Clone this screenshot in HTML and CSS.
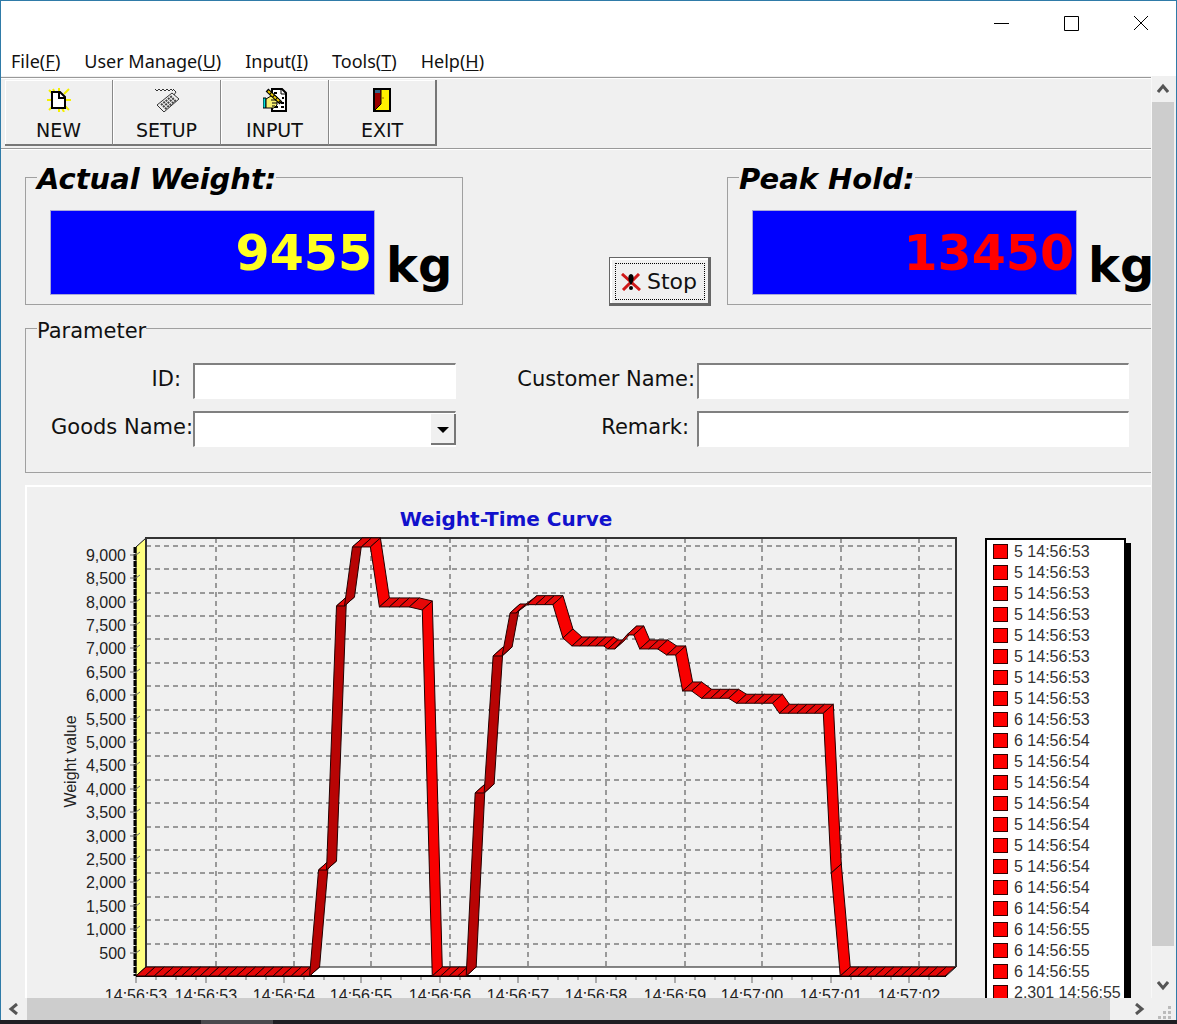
FILE: index.html
```html
<!DOCTYPE html>
<html lang="en">

<head>
    <meta charset="utf-8">
    <meta name="viewport" content="width=device-width">
    <link rel="stylesheet" href="styles.css">
    <title>Weight monitor</title>
</head>

<body>
    <div class="window">
        <header class="titlebar">
            <button class="caption" aria-label="Minimize">
                <svg width="16" height="16" viewBox="0 0 16 16"><path d="M1 8.5h15" /></svg>
            </button>
            <button class="caption" aria-label="Maximize">
                <svg width="16" height="16" viewBox="0 0 16 16"><path d="M1.5 1.5h14v14h-14z" /></svg>
            </button>
            <button class="caption" aria-label="Close">
                <svg width="16" height="16" viewBox="0 0 16 16"><path d="M1 1l14 14M15 1L1 15" /></svg>
            </button>
        </header>

        <nav class="menu">
            <button>File(<u>F</u>)</button>
            <button>User Manage(<u>U</u>)</button>
            <button>Input(<u>I</u>)</button>
            <button>Tools(<u>T</u>)</button>
            <button>Help(<u>H</u>)</button>
        </nav>

        <div class="scroller">
            <main class="viewport">
                <div class="toolbar">
                    <button class="tool">
                        <svg width="24" height="24" viewBox="0 0 24 24">
                            <path d="M2 2l4 4M12 0v4M22 1l-5 5M0 12h4M24 12h-5M2 22l4-4M22 22l-4-4M12 24v-4M6 1l2 4M17 24l-2-4" stroke="#f4f000" stroke-width="2" />
                            <path d="M5 4h8l5 5v11H5z" fill="#fff" stroke="#000" stroke-width="2" />
                            <path d="M12 4v6h6" fill="none" stroke="#000" stroke-width="2" />
                        </svg>
                        NEW
                    </button>
                    <button class="tool">
                        <svg width="24" height="24" viewBox="0 0 24 24" fill="none" stroke="#333">
                            <path d="M0 1l2 2 2-2 2 2 2-2 2 2 2-2 2 2 2-2 2 2" />
                            <path d="M18 1l3 3-2 3" />
                            <path d="M2 17L17 5l7 6L9 24z" fill="#eee" />
                            <path d="M6 17l11-9M8 19l11-9M10 21l11-9" stroke="#444" stroke-width="2" stroke-dasharray="2 1" />
                        </svg>
                        SETUP
                    </button>
                    <button class="tool">
                        <svg width="24" height="24" viewBox="0 0 24 24">
                            <path d="M9 1h10l4 4v18H9z" fill="#fff" stroke="#000" stroke-width="2" />
                            <path d="M18 1v5h5" fill="none" stroke="#000" />
                            <path d="M12 19h3M18 19h3M19 10h2M18 15h3M11 5h3" stroke="#000" stroke-width="2" />
                            <path d="M0 10h3v10H0z" fill="#00e0e0" stroke="#000" />
                            <path d="M3 11l5-3h5l4 4-3 2v3l-3 3H3z" fill="#f7f070" stroke="#000" />
                            <path d="M8 12h6M9 15h5M9 18h3" stroke="#000" />
                            <path d="M4 2l14 13" stroke="#000" stroke-width="4" />
                            <path d="M5 3l12 11" stroke="#e8c800" stroke-width="2" stroke-dasharray="3 1" />
                        </svg>
                        INPUT
                    </button>
                    <button class="tool">
                        <svg width="24" height="24" viewBox="0 0 24 24">
                            <path d="M4 1h16v22H4z" fill="#ffef00" stroke="#000" stroke-width="2" />
                            <path d="M5 2h6v14l-6 6z" fill="#900" />
                            <path d="M5 2h5v3H5z" fill="#368" />
                            <path d="M11 2v14l-6 6" fill="none" stroke="#000" />
                            <path d="M13 9v2" stroke="#a60" />
                        </svg>
                        EXIT
                    </button>
                </div>

                <form class="form">
                    <div class="readings">
                        <fieldset class="group reading">
                            <legend>Actual Weight:</legend>
                            <output class="display actual">9455</output>
                            <span class="unit">kg</span>
                        </fieldset>

                        <button type="button" class="stop">
                            <svg width="20" height="18" viewBox="0 0 20 18">
                                <path d="M1 1l18 16M18 1L2 17" stroke="#d01818" stroke-width="3" />
                                <path d="M10 1c4 1 3 7 0 11c-3-4-4-10 0-11z" />
                                <circle cx="10" cy="15" r="2" />
                            </svg>
                            Stop
                        </button>

                        <fieldset class="group reading">
                            <legend>Peak Hold:</legend>
                            <output class="display peak">13450</output>
                            <span class="unit">kg</span>
                        </fieldset>
                    </div>

                    <fieldset class="group parameter">
                        <legend>Parameter</legend>
                        <label for="id">ID:</label>
                        <input id="id" type="text">
                        <label for="customer">Customer Name:</label>
                        <input id="customer" type="text">
                        <label for="goods">Goods Name:</label>
                        <div class="combo">
                            <select id="goods">
                                <option></option>
                            </select>
                            <span class="arrow"></span>
                        </div>
                        <label for="remark">Remark:</label>
                        <input id="remark" type="text">
                    </fieldset>

                    <section class="chart">
                        <h2>Weight-Time Curve</h2>
                        <div class="chart-body">
                            <svg id="plot" class="plot" role="img" aria-label="Weight-Time Curve"></svg>
                            <ul id="legend" class="legend"></ul>
                        </div>
                    </section>
                </form>
            </main>

            <div class="scrollbar vertical">
                <button aria-label="Scroll up">
                    <svg width="12" height="12" viewBox="0 0 12 12"><path d="M1 9l5-6 5 6" /></svg>
                </button>
                <div class="thumb"></div>
                <button aria-label="Scroll down">
                    <svg width="12" height="12" viewBox="0 0 12 12"><path d="M1 3l5 6 5-6" /></svg>
                </button>
            </div>
            <div class="scrollbar horizontal">
                <button aria-label="Scroll left">
                    <svg width="12" height="12" viewBox="0 0 12 12"><path d="M9 1L3 6l6 5" /></svg>
                </button>
                <div class="thumb"></div>
                <button aria-label="Scroll right">
                    <svg width="12" height="12" viewBox="0 0 12 12"><path d="M3 1l6 5-6 5" /></svg>
                </button>
            </div>
            <svg class="grip" width="24" height="22" viewBox="0 0 24 22">
                <path d="M16 8h3v3h-3zM11 13h3v3h-3zM16 13h3v3h-3zM6 18h3v3H6zM11 18h3v3h-3zM16 18h3v3h-3z" fill="#bbb" />
            </svg>
        </div>
    </div>
    <div class="taskbar"><span></span></div>

    <script src="chart.js"></script>
</body>

</html>
```
FILE: styles.css
```css
* {
    box-sizing: border-box;
}

body {
    margin: 0;
    height: 100vh;
    display: flex;
    flex-direction: column;
    overflow: hidden;
    background-color: #f0f0f0;
    color: #111;
    font-family: "DejaVu Sans", Verdana, sans-serif;
    font-size: 21px;
}

button {
    margin: 0;
    padding: 0;
    border: 0;
    background: none;
    color: inherit;
    font: inherit;
}

.window {
    flex: 1;
    min-height: 0;
    display: flex;
    flex-direction: column;
    border: 1px solid #2f7ba8;
    border-bottom: 0;
}

/* title bar and menu */

.titlebar {
    display: flex;
    justify-content: flex-end;
    height: 45px;
    background-color: #fff;
}

.caption {
    width: 70px;
}

.caption svg {
    fill: none;
    stroke: #000;
}

.menu {
    display: flex;
    gap: 24px;
    height: 30px;
    padding: 0 10px;
    background-color: #fff;
    font-family: "Noto Sans", sans-serif;
    font-size: 18px;
    line-height: 30px;
}

.menu u {
    text-underline-offset: 2px;
}

/* scrolling area */

.scroller {
    flex: 1;
    min-height: 0;
    display: grid;
    grid-template-columns: minmax(0, 1fr) 24px;
    grid-template-rows: minmax(0, 1fr) 22px;
}

.viewport {
    overflow: hidden;
    border-right: 1px solid #f8f8f8;
}

.scrollbar {
    display: flex;
    background-color: #f0f0f0;
}

.scrollbar button {
    flex: none;
    width: 26px;
    display: flex;
    align-items: center;
    justify-content: center;
}

.scrollbar svg {
    fill: none;
    stroke: #555;
    stroke-width: 3;
}

.scrollbar .thumb {
    flex: 1;
    background-color: #cdcdcd;
}

.vertical {
    flex-direction: column;
    padding: 0 2px 0 0;
}

.vertical button {
    width: 22px;
    height: 26px;
}

.vertical .thumb {
    margin-bottom: 26px;
}

.horizontal .thumb {
    margin-right: 16px;
}

.taskbar {
    height: 4px;
    padding-left: 201px;
    background-color: #1f1d22;
}

.taskbar span {
    display: block;
    width: 72px;
    height: 4px;
    background-color: #4b494d;
}

/* toolbar */

.toolbar {
    display: flex;
    height: 72px;
    margin-top: 1px;
    padding: 2px 4px;
    border-top: 1px solid #999;
    border-bottom: 1px solid #999;
    box-shadow: inset 0 1px #fff, 0 1px #fff;
}

.tool {
    display: flex;
    flex-direction: column;
    align-items: center;
    gap: 6px;
    width: 108px;
    padding-top: 8px;
    border: solid #777;
    border-width: 0 2px 2px 0;
    box-shadow: inset 1px 1px #fff;
    font-size: 19px;
    line-height: 24px;
}

.tool:not(:last-child) {
    border-right: 1px solid #888;
}

.tool svg {
    fill: none;
}

/* form */

.form {
    display: flex;
    flex-direction: column;
    margin-right: -14px;
    padding: 9px 0 0 24px;
}

.group {
    margin: 0;
    min-width: 0;
    border: 1px solid #a0a0a0;
}

.group legend {
    margin-left: -13px;
    padding: 0;
}

.readings {
    display: flex;
    align-items: flex-end;
    height: 147px;
}

.reading {
    display: flex;
    align-items: flex-start;
    gap: 11px;
    width: 438px;
    height: 147px;
    padding: 14px 0 0 24px;
}

.reading legend {
    padding-top: 4px;
    font-size: 29px;
    font-weight: bold;
    font-style: italic;
    line-height: 34px;
    color: #000;
}

.display {
    width: 325px;
    height: 85px;
    padding-right: 2px;
    border: 1px solid #a8a8d8;
    background-color: #00f;
    font-size: 49px;
    font-weight: bold;
    line-height: 86px;
    text-align: right;
}

.actual {
    color: #ff2;
}

.peak {
    color: #f00;
}

.unit {
    padding-top: 25px;
    color: #000;
    font-size: 48px;
    font-weight: bold;
    line-height: 60px;
}

.stop {
    display: flex;
    align-items: center;
    justify-content: center;
    gap: 6px;
    width: 102px;
    height: 49px;
    margin: 0 16px -1px auto;
    padding-top: 2px;
    border: 1px solid #666;
    border-right-width: 3px;
    border-bottom-width: 3px;
    outline: 1px dotted #000;
    outline-offset: -7px;
    box-shadow: inset 2px 2px #fff;
    font-size: 22px;
}

.parameter {
    display: grid;
    grid-template-columns: 143px 263px 241px minmax(0, 1fr);
    row-gap: 12px;
    height: 161px;
    margin-top: 7px;
    padding: 19px 35px 0 24px;
    align-content: start;
}

.parameter legend {
    padding-top: 6px;
    line-height: 26px;
}

.parameter label {
    padding-right: 2px;
    line-height: 32px;
    text-align: right;
    white-space: nowrap;
}

.parameter label[for="id"] {
    padding-right: 12px;
}

.parameter label[for="goods"] {
    padding-right: 0;
}

.parameter label[for="remark"] {
    padding-right: 8px;
}

.parameter input,
.parameter select {
    width: 100%;
    height: 36px;
    padding: 0 6px;
    border: solid #808080;
    border-width: 2px 1px 1px 2px;
    border-right-color: #fff;
    border-bottom-color: #fff;
    border-radius: 0;
    background-color: #fff;
    font: inherit;
    appearance: none;
}

.combo {
    position: relative;
}

.combo .arrow {
    position: absolute;
    top: 3px;
    right: 0;
    width: 25px;
    height: 31px;
    border: solid #777;
    border-width: 0 2px 2px 0;
    background-color: #f0f0f0;
    pointer-events: none;
}

.combo .arrow::after {
    content: "";
    display: block;
    margin: 13px 6px;
    border: 6px solid transparent;
    border-top-color: #000;
    border-bottom: 0;
}

/* chart */

.chart {
    margin-top: 12px;
    border: solid #fff;
    border-width: 2px 0 0 2px;
}

.chart h2 {
    margin: 0;
    padding: 18px 180px 0 0;
    color: #11c;
    font-size: 20px;
    line-height: 28px;
    text-align: center;
}

.chart-body {
    display: flex;
    gap: 20px;
    padding-right: 39px;
}

.plot {
    flex: 1;
    min-width: 0;
    height: 480px;
    font-family: "Liberation Sans", Arial, sans-serif;
    font-size: 16px;
}

.plot text {
    fill: #222;
}

.plot .grid {
    stroke: #999;
    stroke-width: 2;
    stroke-dasharray: 5 4;
    shape-rendering: crispEdges;
}

.plot .tick {
    stroke: #666;
}

.plot .frame {
    fill: none;
    stroke: #333;
    stroke-width: 2;
}

.plot .wall {
    fill: #ffff80;
    stroke: #111;
}

.plot .wall-edge {
    stroke: #000;
    stroke-width: 3;
    stroke-dasharray: 6 1;
}

.plot .floor {
    fill: #fff;
    stroke: #111;
}

.plot .axis {
    stroke: #000;
    stroke-width: 2;
}

.plot .ribbon {
    stroke: #200;
    stroke-linejoin: round;
}

.legend {
    flex: none;
    width: 141px;
    margin: 5px 0 0;
    padding: 1px 0 0 6px;
    border: 2px solid #000;
    background-color: #fff;
    box-shadow: 5px 5px #000;
    list-style: none;
    color: #333;
    font-family: "Liberation Sans", Arial, sans-serif;
    font-size: 16px;
    line-height: 21px;
    white-space: nowrap;
}

.legend li {
    display: flex;
    align-items: center;
    gap: 6px;
}

.legend i {
    flex: none;
    width: 15px;
    height: 15px;
    border: 1px solid #300;
    background-color: #f00;
}
```
FILE: chart.js
```js
var plot = document.getElementById('plot');
var legend = document.getElementById('legend');

// [position along the time axis, weight in kg], the axis is 812 units long
var curve = [
    [0, 0], [174, 0], [183, 2265], [191, 2265], [201, 7907], [209, 7907],
    [217, 9168], [235, 9168], [244, 7886], [274, 7886], [287, 7821],
    [297, 0], [331, 0], [340, 3911], [349, 3911], [358, 6838], [367, 6838],
    [375, 7757], [381, 7757], [392, 7935], [418, 7935], [428, 7223],
    [437, 7052], [469, 7052], [473, 6988], [480, 6988], [492, 7287],
    [499, 7287], [505, 6988], [523, 6988], [532, 6860], [541, 6860],
    [548, 6090], [557, 6090], [567, 5934], [594, 5934], [602, 5828],
    [638, 5828], [645, 5614], [689, 5614], [697, 2201], [706, 0], [811, 0]
];
var times = [
    [0, '14:56:53'], [70, '14:56:53'], [148, '14:56:54'], [226, '14:56:55'],
    [305, '14:56:56'], [383, '14:56:57'], [461, '14:56:58'], [540, '14:56:59'],
    [618, '14:57:00'], [697, '14:57:01'], [775, '14:57:02']
];
var samples = [
    [8, '5 14:56:53'], [1, '6 14:56:53'], [1, '6 14:56:54'], [6, '5 14:56:54'],
    [2, '6 14:56:54'], [3, '6 14:56:55'], [1, '2.301 14:56:55']
];

var left = 109;
var right = 19;
var base = 443;
var top3d = 14;
var dx = 10;
var dy = 9;
var step = 9;

function add(name, attrs, text) {
    var el = document.createElementNS('http://www.w3.org/2000/svg', name);
    for (var key in attrs) {
        el.setAttribute(key, attrs[key]);
    }
    if (text) {
        el.textContent = text;
    }
    plot.appendChild(el);
}

function line(x1, y1, x2, y2, cls) {
    add('line', { x1: x1, y1: y1, x2: x2, y2: y2, 'class': cls });
}

function draw() {
    var scale = (plot.clientWidth - left - right) / 812;
    function px(x) { return left + x * scale; }
    function py(kg) { return base - kg * 23.4 / 500; }
    plot.textContent = '';

    var end = px(812);

    // left wall and floor
    add('polygon', {
        points: [left, top3d, left + dx, top3d - dy, left + dx, base - dy, left, base].join(' '),
        'class': 'wall'
    });
    line(left - 1, top3d, left - 1, base, 'wall-edge');
    add('polygon', {
        points: [left, base, left + dx, base - dy, end + dx, base - dy, end, base].join(' '),
        'class': 'floor'
    });

    for (var kg = 500; kg <= 9000; kg += 500) {
        var y = Math.round(py(kg));
        line(left + dx, y - dy, end + dx, y - dy, 'grid');
        line(left - 6, y, left, y, 'tick');
        line(left, y, left + 4, y - 3, 'tick');
        add('text', { x: left - 10, y: y + 6, 'text-anchor': 'end' }, kg.toLocaleString('en-US'));
    }

    times.forEach(function (t, i) {
        var x = Math.round(px(t[0]));
        if (i > 0) {
            line(x + dx, top3d - dy, x + dx, base - dy, 'grid');
        }
        line(x, base, x, base + 7, 'tick');
        add('text', { x: x, y: base + 25, 'text-anchor': 'middle' }, t[1]);
        for (var m = 1; m < 4 && x + m * 20 < end; m++) {
            line(x + m * 20, base, x + m * 20, base + 4, 'tick');
        }
    });
    var middle = (base + top3d) / 2;
    add('text', {
        x: 49, y: middle, 'text-anchor': 'middle',
        transform: 'rotate(-90 49 ' + middle + ')'
    }, 'Weight value');

    add('path', {
        d: 'M' + (left + dx) + ' ' + (base - dy) + 'V' + (top3d - dy) + 'H' + (end + dx) + 'V' + (base - dy),
        'class': 'frame'
    });
    line(left, base, end, base, 'axis');

    // one parallelogram per sample, long flat runs are split up
    for (var i = 1; i < curve.length; i++) {
        var a = curve[i - 1];
        var b = curve[i];
        var slope = (b[1] - a[1]) / (b[0] - a[0]);
        var color = slope > 100 ? '#b80404' : slope < -10 ? '#f80000' : '#e60808';
        var n = Math.max(1, Math.round((b[0] - a[0]) / step));
        for (var k = 0; k < n; k++) {
            var x1 = px(a[0] + (b[0] - a[0]) * k / n);
            var x2 = px(a[0] + (b[0] - a[0]) * (k + 1) / n);
            var y1 = py(a[1] + (b[1] - a[1]) * k / n);
            var y2 = py(a[1] + (b[1] - a[1]) * (k + 1) / n);
            add('polygon', {
                points: [x1, y1, x2, y2, x2 + dx, y2 - dy, x1 + dx, y1 - dy].join(' '),
                fill: color,
                'class': 'ribbon'
            });
        }
    }
}

samples.forEach(function (s) {
    for (var i = 0; i < s[0]; i++) {
        var li = document.createElement('li');
        li.appendChild(document.createElement('i'));
        li.appendChild(document.createTextNode(s[1]));
        legend.appendChild(li);
    }
});

draw();
window.addEventListener('resize', draw);
```
